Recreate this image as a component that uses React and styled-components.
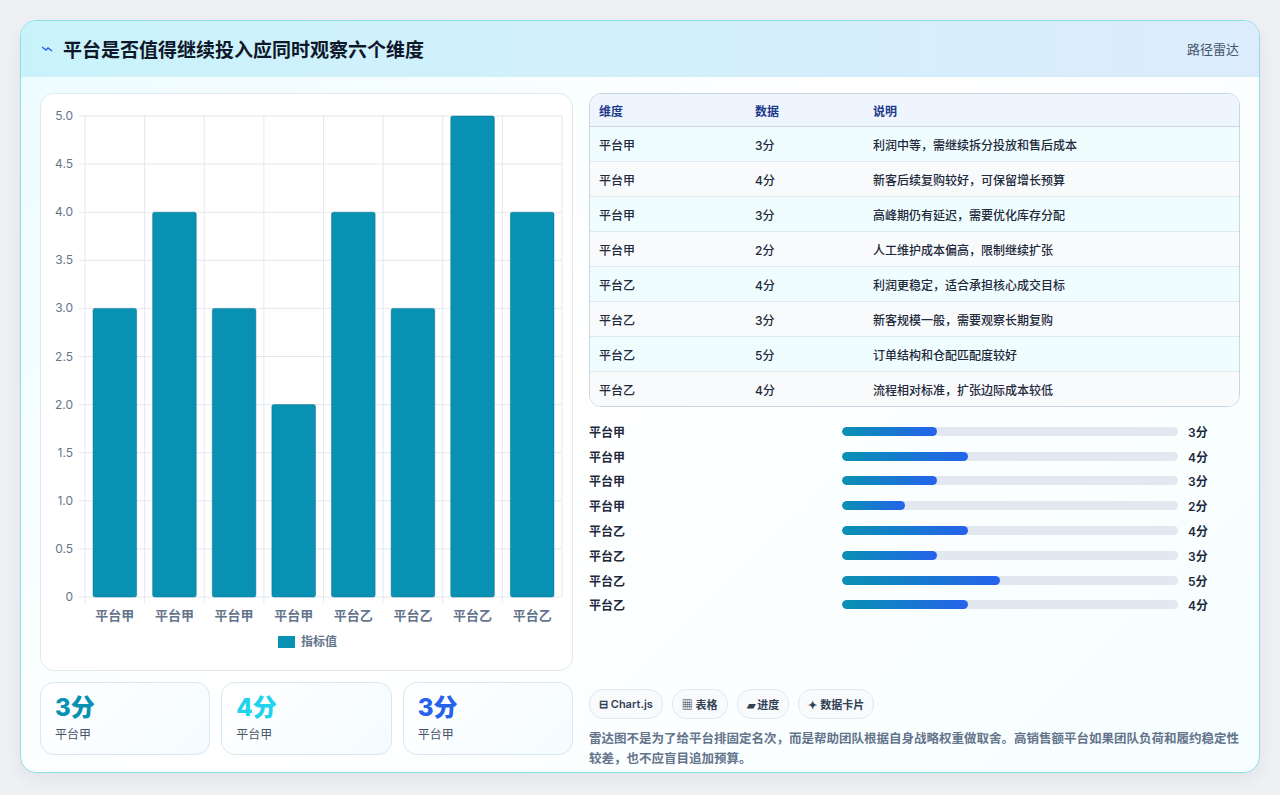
import styled, { createGlobalStyle } from 'styled-components';

const Global = createGlobalStyle`
  body { margin: 0; background: #eef0f3; font-family: Inter, "Noto Sans CJK SC", sans-serif; }
`;

const Page = styled.div`
  padding: 20px 20px 0;
  height: 795px;
  box-sizing: border-box;
`;

const Card = styled.div`
  border: 1px solid #8fdcea;
  border-radius: 16px;
  background: linear-gradient(135deg, #ecfcff 0%, #ffffff 45%, #f6feff 100%);
  overflow: hidden;
  height: 753px;
  box-sizing: border-box;
  box-shadow: 0 6px 18px rgba(0, 0, 0, 0.06);
`;

const Header = styled.div`
  height: 55px;
  display: flex;
  align-items: center;
  justify-content: space-between;
  padding: 0 20px;
  background: linear-gradient(90deg, #c9f3fb, #dcecfd);
  border-bottom: 1px solid #d4eef5;
`;

const Title = styled.h1`
  margin: 0;
  font-size: 19px;
  font-weight: 700;
  color: #0f172a;
  display: flex;
  align-items: center;
  gap: 10px;
`;

const Tag = styled.span`
  font-size: 13px;
  color: #475569;
`;

const Body = styled.div`
  display: grid;
  grid-template-columns: 533px 1fr;
  gap: 16px;
  padding: 16px 19px 0 19px;
`;

const Left = styled.div`
  display: flex;
  flex-direction: column;
  gap: 11px;
`;

const ChartBox = styled.div`
  height: 578px;
  border: 1px solid #e2e8f0;
  border-radius: 14px;
  background: #fff;
  box-sizing: border-box;
`;

const Stats = styled.div`
  display: grid;
  grid-template-columns: repeat(3, 1fr);
  gap: 11px;
`;

const Stat = styled.div`
  height: 73px;
  border: 1px solid #dbe7f0;
  border-radius: 14px;
  background: linear-gradient(135deg, #fff, #f4fbff);
  padding: 10px 14px;
  box-sizing: border-box;
`;

const StatValue = styled.div`
  font-size: 24px;
  font-weight: 800;
  color: ${p => p.color};
  line-height: 30px;
`;

const StatLabel = styled.div`
  font-size: 12px;
  color: #475569;
  margin-top: 2px;
`;

const Right = styled.div`
  display: flex;
  flex-direction: column;
`;

const Table = styled.table`
  width: 100%;
  border-collapse: separate;
  border-spacing: 0;
  border: 1px solid #cbd5e1;
  border-radius: 12px;
  overflow: hidden;
  font-size: 12px;
  color: #1e293b;
`;

const Th = styled.th`
  text-align: left;
  font-weight: 600;
  color: #1e3a8a;
  background: #eef5ff;
  height: 32px;
  padding: 0 9px;
  border-bottom: 1px solid #cbd5e1;
  width: ${p => p.w || 'auto'};
`;

const Tr = styled.tr`
  background: ${p => (p.odd ? '#f8fafc' : '#f0fdff')};
`;

const Td = styled.td`
  height: 34px;
  padding: 0 9px;
  font-weight: 500;
  border-bottom: ${p => (p.last ? 'none' : '1px solid #e2e8f0')};
`;

const Bars = styled.div`
  margin-top: 12px;
  display: flex;
  flex-direction: column;
`;

const BarRow = styled.div`
  display: grid;
  grid-template-columns: 243px 336px 1fr;
  align-items: center;
  gap: 10px;
  height: 24.8px;
  font-size: 12px;
  font-weight: 600;
  color: #1e293b;
`;

const Track = styled.div`
  height: 9px;
  border-radius: 5px;
  background: #e2e8f0;
  overflow: hidden;
`;

const Fill = styled.div`
  height: 100%;
  border-radius: 5px;
  background: linear-gradient(90deg, #0891b2, #2563eb);
`;

const Chips = styled.div`
  display: flex;
  gap: 9px;
  margin-top: 72px;
`;

const Chip = styled.span`
  height: 28px;
  padding: 0 9px;
  border: 1px solid #e2e8f0;
  border-radius: 14px;
  background: #f8fafc;
  font-size: 11px;
  font-weight: 600;
  color: #334155;
  display: flex;
  align-items: center;
  gap: 4px;
`;

const Note = styled.p`
  margin: 10px 0 0;
  font-size: 12.5px;
  line-height: 20px;
  font-weight: 600;
  color: #64748b;
`;

const rows = [
  ['平台甲', 3, '利润中等，需继续拆分投放和售后成本'],
  ['平台甲', 4, '新客后续复购较好，可保留增长预算'],
  ['平台甲', 3, '高峰期仍有延迟，需要优化库存分配'],
  ['平台甲', 2, '人工维护成本偏高，限制继续扩张'],
  ['平台乙', 4, '利润更稳定，适合承担核心成交目标'],
  ['平台乙', 3, '新客规模一般，需要观察长期复购'],
  ['平台乙', 5, '订单结构和仓配匹配度较好'],
  ['平台乙', 4, '流程相对标准，扩张边际成本较低'],
];

const Chart = () => {
  const x0 = 44, x1 = 521, yTop = 22, yBot = 503;
  const step = (x1 - x0) / 8;
  const ticks = [];
  for (let i = 0; i <= 10; i++) ticks.push(i * 0.5);
  const y = v => yBot - (v / 5) * (yBot - yTop);
  return (
    <svg width="531" height="576" style={{ display: 'block' }}>
      {ticks.map(t => (
        <g key={t}>
          <line x1={x0 - 6} x2={x1} y1={y(t)} y2={y(t)} stroke="#e5e7eb" />
          <text x={x0 - 12} y={y(t) + 4} fontSize="12" fill="#64748b" textAnchor="end">
            {t === 0 ? '0' : t.toFixed(1)}
          </text>
        </g>
      ))}
      {rows.map((_, i) => (
        <line key={i} x1={x0 + i * step} x2={x0 + i * step} y1={yTop} y2={yBot + 6} stroke="#e5e7eb" />
      ))}
      <line x1={x1} x2={x1} y1={yTop} y2={yBot} stroke="#e5e7eb" />
      {rows.map((r, i) => (
        <g key={i}>
          <rect x={x0 + i * step + 8} y={y(r[1])} width={step - 16} height={yBot - y(r[1])} rx="2" fill="#0891b2" stroke="#0e7490" strokeWidth="0.5" />
          <text x={x0 + i * step + step / 2} y={526} fontSize="13" fill="#64748b" fontWeight="600" textAnchor="middle">{r[0]}</text>
        </g>
      ))}
      <rect x="237" y="542" width="17" height="12" fill="#0891b2" />
      <text x="260" y="552" fontSize="12" fill="#64748b" fontWeight="600">指标值</text>
    </svg>
  );
};

export default function App() {
  return (
    <Page>
      <Global />
      <Card>
        <Header>
          <Title>
            <svg width="12" height="8" viewBox="0 0 12 8"><path d="M1 2 L5 5 L7 3 L11 6" stroke="#2563eb" strokeWidth="1.4" fill="none" /></svg>
            平台是否值得继续投入应同时观察六个维度
          </Title>
          <Tag>路径雷达</Tag>
        </Header>
        <Body>
          <Left>
            <ChartBox><Chart /></ChartBox>
            <Stats>
              <Stat><StatValue color="#0891b2">3分</StatValue><StatLabel>平台甲</StatLabel></Stat>
              <Stat><StatValue color="#22d3ee">4分</StatValue><StatLabel>平台甲</StatLabel></Stat>
              <Stat><StatValue color="#2563eb">3分</StatValue><StatLabel>平台甲</StatLabel></Stat>
            </Stats>
          </Left>
          <Right>
            <Table>
              <thead>
                <tr><Th w="138px">维度</Th><Th w="100px">数据</Th><Th>说明</Th></tr>
              </thead>
              <tbody>
                {rows.map((r, i) => (
                  <Tr key={i} odd={i % 2 === 1}>
                    <Td last={i === 7}>{r[0]}</Td>
                    <Td last={i === 7}>{r[1]}分</Td>
                    <Td last={i === 7}>{r[2]}</Td>
                  </Tr>
                ))}
              </tbody>
            </Table>
            <Bars>
              {rows.map((r, i) => (
                <BarRow key={i}>
                  <span>{r[0]}</span>
                  <Track><Fill style={{ width: `${r[1] * 9.4}%` }} /></Track>
                  <span>{r[1]}分</span>
                </BarRow>
              ))}
            </Bars>
            <Chips>
              <Chip>⊟ Chart.js</Chip>
              <Chip>▦ 表格</Chip>
              <Chip>▰ 进度</Chip>
              <Chip>✦ 数据卡片</Chip>
            </Chips>
            <Note>雷达图不是为了给平台排固定名次，而是帮助团队根据自身战略权重做取舍。高销售额平台如果团队负荷和履约稳定性较差，也不应盲目追加预算。</Note>
          </Right>
        </Body>
      </Card>
    </Page>
  );
}
